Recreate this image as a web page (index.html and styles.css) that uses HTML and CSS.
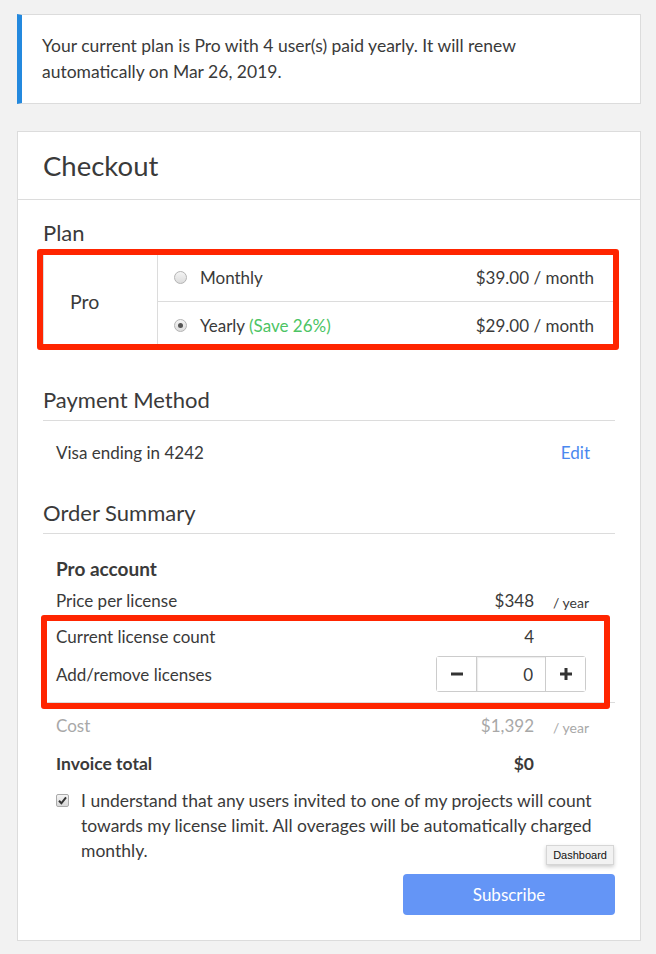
FILE: index.html
```html
<!DOCTYPE html>
<html lang="en">
<head>
    <meta charset="UTF-8">
    <meta name="viewport" content="width=device-width, initial-scale=1.0">
    <title>Checkout</title>
    <link rel="stylesheet" href="styles.css">
</head>
<body>
    <div class="notice">
        Your current plan is Pro with 4 user(s) paid yearly. It will renew automatically on Mar 26, 2019.
    </div>

    <div class="card">
        <div class="card-header">Checkout</div>
        <div class="card-body">
            <h3 class="section-title plan-title">Plan</h3>
            <div class="plan-box">
                <div class="plan-name">Pro</div>
                <div class="plan-options">
                    <div class="plan-option">
                        <span class="radio"></span>
                        <span class="option-label">Monthly</span>
                        <span class="option-price">$39.00 / month</span>
                    </div>
                    <div class="plan-option">
                        <span class="radio checked"></span>
                        <span class="option-label">Yearly <span class="save">(Save 26%)</span></span>
                        <span class="option-price">$29.00 / month</span>
                    </div>
                </div>
                <div class="mark mark-plan"></div>
            </div>

            <h3 class="section-title">Payment Method</h3>
            <div class="pay-row">
                <span>Visa ending in 4242</span>
                <a class="edit-link" href="#">Edit</a>
            </div>

            <h3 class="section-title">Order Summary</h3>
            <div class="summary">
                <div class="sum-row sum-head">
                    <span class="sum-label">Pro account</span>
                </div>
                <div class="sum-row sum-price">
                    <span class="sum-label">Price per license</span>
                    <span class="sum-amount">$348</span>
                    <span class="sum-unit">/ year</span>
                </div>
                <div class="licenses">
                    <div class="sum-row sum-current">
                        <span class="sum-label">Current license count</span>
                        <span class="sum-amount">4</span>
                        <span class="sum-unit"></span>
                    </div>
                    <div class="sum-row sum-add">
                        <span class="sum-label">Add/remove licenses</span>
                        <div class="stepper">
                            <button class="step-btn" type="button">
                                <svg width="12" height="12" viewBox="0 0 12 12"><rect x="0" y="4.5" width="12" height="3" fill="#333"/></svg>
                            </button>
                            <input class="step-input" type="text" value="0">
                            <button class="step-btn" type="button">
                                <svg width="12" height="12" viewBox="0 0 12 12"><rect x="0" y="4.5" width="12" height="3" fill="#333"/><rect x="4.5" y="0" width="3" height="12" fill="#333"/></svg>
                            </button>
                        </div>
                    </div>
                    <div class="mark mark-licenses"></div>
                </div>
                <div class="sum-row sum-cost">
                    <span class="sum-label">Cost</span>
                    <span class="sum-amount">$1,392</span>
                    <span class="sum-unit">/ year</span>
                </div>
                <div class="sum-row sum-total">
                    <span class="sum-label">Invoice total</span>
                    <span class="sum-amount">$0</span>
                    <span class="sum-unit"></span>
                </div>
            </div>

            <label class="agree">
                <span class="checkbox">
                    <svg width="9" height="9" viewBox="0 0 9 9"><path d="M1 4.8 L3.4 7.3 L8 1.4" fill="none" stroke="#333" stroke-width="2"/></svg>
                </span>
                <span>I understand that any users invited to one of my projects will count towards my license limit. All overages will be automatically charged monthly.</span>
            </label>

            <div class="actions">
                <span class="tooltip">Dashboard</span>
                <button class="subscribe" type="button">Subscribe</button>
            </div>
        </div>
    </div>
</body>
</html>
```

FILE: styles.css
```css
body{
    margin: 0;
    padding: 14px 15px 14px 17px;
    background-color: #f2f2f2;
    font-family: Lato, "Open Sans", sans-serif;
    font-size: 17px;
    color: #3a3a3a;
}
.notice{
    background-color: #fff;
    border: 1px solid #dcdcdc;
    border-left: 5px solid #2489de;
    padding: 18px 20px;
    line-height: 26px;
    font-size: 17.5px;
    margin-bottom: 27px;
}
.card{
    background-color: #fff;
    border: 1px solid #dcdcdc;
}
.card-header{
    padding: 17px 25px;
    font-size: 27.5px;
    line-height: 33px;
    color: #3a3a3a;
    border-bottom: 1px solid #dcdcdc;
}
.card-body{
    padding: 20px 25px 25px;
}
.section-title{
    margin: 37px 0 0;
    padding-bottom: 8px;
    font-size: 22px;
    line-height: 25px;
    font-weight: normal;
    color: #3a3a3a;
    border-bottom: 1px solid #dcdcdc;
}
.section-title.plan-title{
    margin: 0 0 8px;
    padding-bottom: 0;
    border-bottom: none;
}
.plan-box{
    position: relative;
    display: flex;
    border: 1px solid #dcdcdc;
}
.plan-name{
    width: 87px;
    padding-left: 26px;
    display: flex;
    align-items: center;
    font-size: 19.5px;
    border-right: 1px solid #dcdcdc;
}
.plan-options{
    flex: 1;
}
.plan-option{
    display: flex;
    align-items: center;
    height: 47px;
    padding: 0 20px 0 16px;
}
.plan-option + .plan-option{
    border-top: 1px solid #dcdcdc;
}
.option-label{
    flex: 1;
    margin-left: 13px;
}
.save{
    color: #4cc464;
}
.radio{
    width: 13px;
    height: 13px;
    border-radius: 50%;
    box-sizing: border-box;
    border: 1px solid #b4b4b4;
    background: linear-gradient(#f4f4f4, #dcdcdc);
    position: relative;
}
.radio.checked::after{
    content: "";
    position: absolute;
    left: 3px;
    top: 3px;
    width: 5px;
    height: 5px;
    border-radius: 50%;
    background-color: #555;
}
.mark{
    position: absolute;
    border: 6px solid #ff2500;
    border-radius: 3px;
    pointer-events: none;
}
.mark-plan{
    left: -7px;
    right: -5px;
    top: -5px;
    bottom: -1px;
}
.pay-row{
    display: flex;
    justify-content: space-between;
    padding: 20px 25px 20px 13px;
    line-height: 24px;
}
.pay-row + .section-title{
    margin-top: 15px;
}
.edit-link{
    color: #4a88ef;
    text-decoration: none;
}
.summary{
    padding-top: 19px;
}
.sum-row{
    display: flex;
    align-items: center;
    padding-left: 13px;
}
.sum-label{
    flex: 1;
}
.sum-unit{
    width: 62px;
    padding-left: 19px;
    font-size: 14px;
    position: relative;
    top: 2px;
}
.sum-head{
    height: 31px;
    font-weight: bold;
    font-size: 19px;
}
.sum-price{
    height: 32px;
}
.licenses{
    position: relative;
    border-bottom: 1px solid #dcdcdc;
    padding-bottom: 10px;
}
.sum-current{
    height: 40px;
}
.sum-add{
    height: 36px;
}
.mark-licenses{
    left: -2px;
    right: 5px;
    top: -1px;
    bottom: -7px;
}
.stepper{
    display: flex;
    height: 36px;
    margin-right: 29px;
    border: 1px solid #ccc;
    border-radius: 3px;
    box-sizing: border-box;
}
.step-btn{
    width: 39px;
    border: none;
    background-color: #fff;
    padding: 0;
    display: flex;
    align-items: center;
    justify-content: center;
}
.step-input{
    width: 70px;
    box-sizing: border-box;
    border: none;
    border-left: 1px solid #ccc;
    border-right: 1px solid #ccc;
    box-shadow: inset 1px 1px 1px rgba(0,0,0,0.08);
    text-align: right;
    padding: 0 12px;
    font-family: inherit;
    font-size: 17px;
    color: #3a3a3a;
}
.sum-cost{
    height: 42px;
    margin-top: 1px;
    color: #a8a8a8;
}
.sum-total{
    height: 34px;
    font-weight: bold;
    font-size: 17.5px;
}
.agree{
    display: flex;
    gap: 12px;
    margin-top: 8px;
    padding-left: 13px;
    line-height: 25px;
    font-size: 17.5px;
}
.checkbox{
    flex: none;
    width: 13px;
    height: 13px;
    margin-top: 6px;
    box-sizing: border-box;
    border: 1px solid #aaa;
    border-radius: 2px;
    background: linear-gradient(#f4f4f4, #d8d8d8);
    display: flex;
    align-items: center;
    justify-content: center;
}
.actions{
    position: relative;
    display: flex;
    justify-content: flex-end;
    margin-top: 11px;
}
.subscribe{
    width: 212px;
    height: 41px;
    border: none;
    border-radius: 4px;
    background-color: #6495f6;
    color: #fff;
    font-family: inherit;
    font-size: 17px;
}
.tooltip{
    position: absolute;
    right: 1px;
    top: -29px;
    padding: 2px 6px;
    font-family: "Liberation Sans", Arial, sans-serif;
    font-size: 11px;
    line-height: 14px;
    color: #111;
    background-color: #f2f2f2;
    border: 1px solid #d6d6d6;
    box-shadow: 0 2px 4px rgba(0,0,0,0.2);
}
```
